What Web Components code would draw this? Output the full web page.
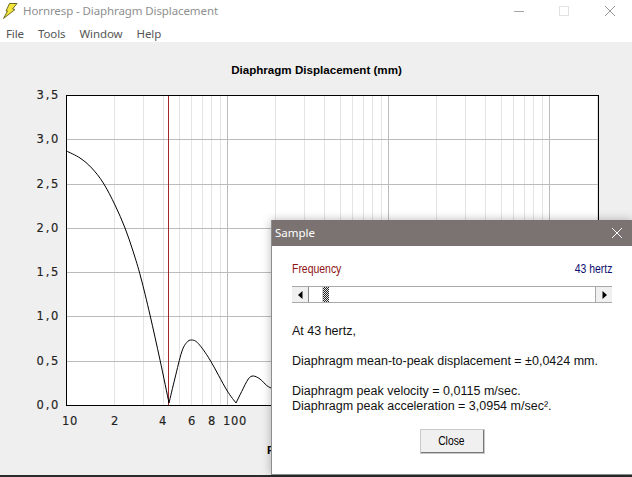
<!DOCTYPE html>
<html>
<head>
<meta charset="utf-8">
<title>Hornresp</title>
<style>
html, body { margin: 0; padding: 0; background: #efefef; overflow: hidden; }
</style>
</head>
<body>
<app-window caption="Hornresp - Diaphragm Displacement">
    <response-chart></response-chart>
    <sample-dialog slot="dialog" caption="Sample"></sample-dialog>
</app-window>

<script>
const uiFont = '"Noto Sans", "Open Sans", sans-serif'

const windowTemplate = document.createElement('template')
windowTemplate.innerHTML = `
<style>
:host {
    display: flex;
    flex-direction: column;
    position: relative;
    width: 632px;
    height: 477px;
    overflow: hidden;
    background: #efefef;
    font-family: ${uiFont};
}
.titlebar {
    display: flex;
    align-items: center;
    height: 23px;
    background: #fff;
    flex: none;
}
.logo { width: 23px; height: 23px; flex: none; }
.caption { font-size: 11.5px; color: #8f8f8f; letter-spacing: -0.1px; padding-bottom: 2px; }
.controls { margin-left: auto; display: flex; }
.controls svg { width: 46px; height: 23px; display: block; }
.menu {
    display: flex;
    align-items: center;
    gap: 14px;
    height: 18px;
    padding: 1px 0 0 6px;
    background: #fff;
    flex: none;
    font-size: 11.5px;
    letter-spacing: -0.1px;
    color: #555;
}
.content { flex: 1; min-height: 0; }
.strip { height: 2px; background: #2b2b2b; flex: none; }
</style>
<div class="titlebar">
    <svg class="logo" viewBox="0 0 23 23">
        <path d="M9.5 3.5 L17 3.5 L12.5 9 L15 9.5 L3.5 18.5 L7.5 11 L6 11 Z" fill="#f4e53c" stroke="#6d6a22" stroke-width="1"/>
    </svg>
    <span class="caption"></span>
    <div class="controls">
        <svg viewBox="0 0 46 23"><path d="M20 11.5 H30" stroke="#a6a6a6" fill="none"/></svg>
        <svg viewBox="0 0 46 23"><rect x="19.5" y="6.5" width="9" height="9" stroke="#e2e2e2" fill="none"/></svg>
        <svg viewBox="0 0 46 23"><path d="M19 6 L29 16 M29 6 L19 16" stroke="#9a9a9a" fill="none"/></svg>
    </div>
</div>
<div class="menu">
    <span>File</span><span>Tools</span><span>Window</span><span>Help</span>
</div>
<div class="content"><slot></slot></div>
<div class="strip"></div>
<slot name="dialog"></slot>
`

class AppWindow extends HTMLElement {
    constructor() {
        super()
        this.attachShadow({mode: 'open'})
        this.shadowRoot.appendChild(windowTemplate.content.cloneNode(true))
        this.shadowRoot.querySelector('.caption').textContent = this.getAttribute('caption')
    }
}

// plot area in page pixels, the x axis is log with 161px per decade
const plot = {left: 66, right: 598, top: 95, bottom: 405, decade: 161}

// one list per lobe, the cusps at the nulls stay sharp
const lobes = [
    [[66.5,151],[80,158],[91.7,168],[103.3,183],[115,205],[125,228],[133.3,252],[140.7,277],[150,315],[160,360],[169,403]],
    [[169,403],[175,378],[181.7,352],[186.7,342.5],[191.7,340],[198.3,343.5],[210,360],[226.7,390],[236,403]],
    [[236,403],[241.7,391.5],[248.3,379],[253.3,376],[260,379],[266.7,385.5],[272,388.5]]
]

function smoothPath(points) {
    let d = `M${points[0]}`
    for (let i = 0; i < points.length - 1; i++) {
        let a = points[Math.max(i - 1, 0)], b = points[i], c = points[i + 1], e = points[Math.min(i + 2, points.length - 1)]
        let c1 = [b[0] + (c[0] - a[0]) / 6, b[1] + (c[1] - a[1]) / 6]
        let c2 = [c[0] - (e[0] - b[0]) / 6, c[1] - (e[1] - b[1]) / 6]
        d += ` C${c1} ${c2} ${c}`
    }
    return d
}

const chartTemplate = document.createElement('template')
chartTemplate.innerHTML = `
<style>
:host { display: block; height: 100%; }
svg { display: block; width: 632px; height: 433px; }
text { font-family: "DejaVu Sans", sans-serif; font-size: 11.5px; fill: #222; stroke: #222; stroke-width: .15px; }
.ytick { letter-spacing: 1.7px; }
.xtick { letter-spacing: .7px; }
.heading { font-family: "Liberation Sans", sans-serif; font-size: 11.6px; font-weight: bold; fill: #000; stroke: none; }
.grid line { shape-rendering: crispEdges; }
</style>
<svg viewBox="0 42 632 433"></svg>
`

class ResponseChart extends HTMLElement {
    constructor() {
        super()
        this.attachShadow({mode: 'open'})
        this.shadowRoot.appendChild(chartTemplate.content.cloneNode(true))
    }
    connectedCallback() {
        let out = ''
        out += `<text class="heading" x="316.5" y="74" text-anchor="middle">Diaphragm Displacement (mm)</text>`
        out += `<rect x="${plot.left}" y="${plot.top}" width="${plot.right - plot.left}" height="${plot.bottom - plot.top}" fill="#fff"/>`
        out += '<g class="grid">'
        for (let decade = 0; decade < 4; decade++) {
            for (let n = 1; n < 10; n++) {
                let x = Math.round(plot.left + (decade + Math.log10(n)) * plot.decade)
                if (x <= plot.left || x >= plot.right) continue
                let colour = n == 1 ? '#bcbcbc' : '#e4e4e4'
                out += `<line x1="${x + .5}" x2="${x + .5}" y1="${plot.top}" y2="${plot.bottom}" stroke="${colour}"/>`
            }
        }
        let labels = ['3,5', '3,0', '2,5', '2,0', '1,5', '1,0', '0,5', '0,0']
        labels.forEach((label, i) => {
            let y = Math.round(plot.top + i * (plot.bottom - plot.top) / 7)
            if (i > 0 && i < 7) out += `<line x1="${plot.left}" x2="${plot.right}" y1="${y + .5}" y2="${y + .5}" stroke="#bcbcbc"/>`
            out += `<text class="ytick" x="60" y="${y + 4}" text-anchor="end">${label}</text>`
        })
        out += `<line x1="168.5" x2="168.5" y1="${plot.top}" y2="${plot.bottom}" stroke="#a3262a"/>`
        out += `<rect x="${plot.left}.5" y="${plot.top}.5" width="${plot.right - plot.left}" height="${plot.bottom - plot.top}" fill="none" stroke="#000"/>`
        out += '</g>'
        lobes.forEach(points => {
            out += `<path d="${smoothPath(points)}" fill="none" stroke="#000" stroke-width="1"/>`
        })
        let ticks = [['10', 70], ['2', 115], ['4', 163], ['6', 192], ['8', 212], ['100', 235]]
        ticks.forEach(([label, x]) => {
            out += `<text class="xtick" x="${x}" y="425" text-anchor="middle">${label}</text>`
        })
        out += `<text class="heading" x="267" y="454">Frequency (hertz)</text>`
        this.shadowRoot.querySelector('svg').innerHTML = out
    }
}

const scrollTemplate = document.createElement('template')
scrollTemplate.innerHTML = `
<style>
:host {
    display: flex;
    height: 17px;
    border-top: 1px solid #a8a8a8;
    border-bottom: 1px solid #a8a8a8;
    box-sizing: border-box;
    background: #fff;
}
.arrow {
    width: 17px;
    flex: none;
    box-sizing: border-box;
    background: #f0f0f0;
    border-right: 1px solid #8c8c8c;
    display: flex;
    align-items: center;
    justify-content: center;
}
.arrow:last-child { border-right: none; border-left: 1px solid #a8a8a8; }
.arrow svg { width: 5px; height: 8px; display: block; }
.track { flex: 1; padding-left: 13px; }
.thumb {
    width: 7px;
    height: 100%;
    box-sizing: border-box;
    border-left: 1px solid #cfcfcf;
    background: repeating-conic-gradient(#222 0 25%, #e8e8e8 0 50%) 0 0 / 2px 2px;
}
</style>
<div class="arrow"><svg viewBox="0 0 5 8"><path d="M4.5 0 V8 L0 4 Z" fill="#000"/></svg></div>
<div class="track"><div class="thumb"></div></div>
<div class="arrow"><svg viewBox="0 0 5 8"><path d="M.5 0 V8 L5 4 Z" fill="#000"/></svg></div>
`

class HScroll extends HTMLElement {
    constructor() {
        super()
        this.attachShadow({mode: 'open'})
        this.shadowRoot.appendChild(scrollTemplate.content.cloneNode(true))
    }
}

const dialogTemplate = document.createElement('template')
dialogTemplate.innerHTML = `
<style>
:host {
    display: flex;
    flex-direction: column;
    position: absolute;
    left: 271px;
    top: 220px;
    width: 361px;
    height: 255px;
    box-sizing: border-box;
    border-left: 1px solid #8d8d8d;
    border-bottom: 1px solid #8d8d8d;
    background: #fff;
    box-shadow: 0 0 9px rgba(0,0,0,.28);
    font-family: "Liberation Sans", Arial, sans-serif;
    font-size: 12.5px;
    color: #111;
}
.bar {
    display: flex;
    align-items: center;
    justify-content: space-between;
    height: 26px;
    flex: none;
    padding: 0 10px 0 3px;
    background: #7b7371;
    color: #fff;
    font-family: ${uiFont};
    font-size: 11.5px;
}
.bar .caption { padding-bottom: 2px; }
.bar svg { width: 10px; height: 10px; display: block; }
.body { padding: 16px 20px 0 20px; display: flex; flex-direction: column; }
.freq { display: flex; justify-content: space-between; line-height: 15px; height: 15px; font-size: 12px; }
.freq span { display: inline-block; transform: scaleX(.87); }
.freq .name { color: #8e1416; transform-origin: left; }
.freq .value { color: #0e0e6e; transform-origin: right; }
h-scroll { margin-top: 9px; }
.lines { margin-top: 21px; line-height: 15px; }
.lines p { margin: 0; }
.gap { margin-top: 15px !important; }
.actions { display: flex; justify-content: center; margin-top: 15px; }
button {
    width: 65px;
    height: 25px;
    box-sizing: border-box;
    background: #f0f0f0;
    border: 1px solid #fff;
    border-right: 2px solid #777;
    border-bottom: 2px solid #777;
    outline: 1px solid #c9c9c9;
    outline-offset: -1px;
    font: inherit;
    font-size: 12px;
    color: #000;
    padding: 0;
}
button span { display: inline-block; transform: scaleX(.86); }
</style>
<div class="bar">
    <span class="caption"></span>
    <svg viewBox="0 0 10 10"><path d="M0 0 L10 10 M10 0 L0 10" stroke="#fff" fill="none"/></svg>
</div>
<div class="body">
    <div class="freq"><span class="name">Frequency</span><span class="value">43 hertz</span></div>
    <h-scroll></h-scroll>
    <div class="lines">
        <p>At 43 hertz,</p>
        <p class="gap">Diaphragm mean-to-peak displacement = ±0,0424 mm.</p>
        <p class="gap">Diaphragm peak velocity = 0,0115 m/sec.</p>
        <p>Diaphragm peak acceleration = 3,0954 m/sec².</p>
    </div>
    <div class="actions"><button type="button"><span>Close</span></button></div>
</div>
`

class SampleDialog extends HTMLElement {
    constructor() {
        super()
        this.attachShadow({mode: 'open'})
        this.shadowRoot.appendChild(dialogTemplate.content.cloneNode(true))
        this.shadowRoot.querySelector('.caption').textContent = this.getAttribute('caption')
    }
}

window.customElements.define('app-window', AppWindow)
window.customElements.define('response-chart', ResponseChart)
window.customElements.define('h-scroll', HScroll)
window.customElements.define('sample-dialog', SampleDialog)
</script>
</body>
</html>
